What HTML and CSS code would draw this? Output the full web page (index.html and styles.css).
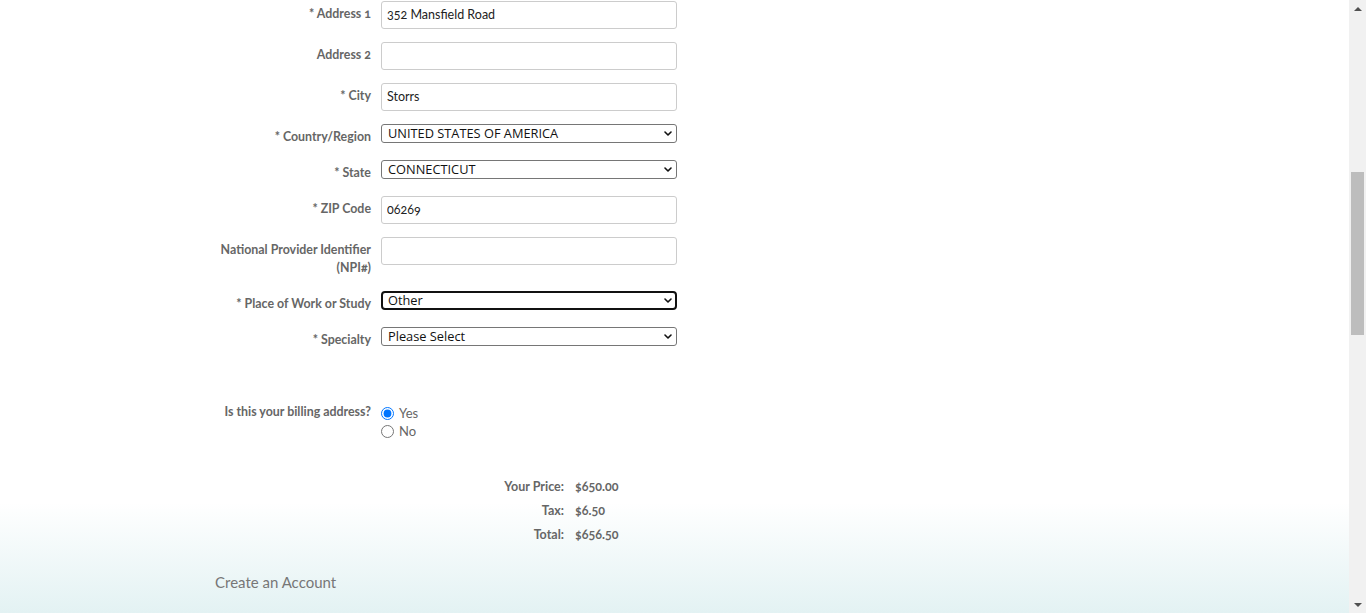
FILE: index.html
```html
<!DOCTYPE html>
<html lang="en">
<head>
<meta charset="utf-8">
<title>Checkout – Address</title>
<link rel="stylesheet" href="styles.css">
</head>
<body>
<div class="viewport">
  <main class="page">
    <form class="form">
      <div class="row">
        <label class="label" for="a1">* Address 1</label>
        <input class="text" id="a1" type="text" value="352 Mansfield Road">
      </div>
      <div class="row">
        <label class="label" for="a2">Address 2</label>
        <input class="text" id="a2" type="text" value="">
      </div>
      <div class="row">
        <label class="label" for="city">* City</label>
        <input class="text" id="city" type="text" value="Storrs">
      </div>
      <div class="row">
        <label class="label" for="country">* Country/Region</label>
        <div class="select-wrap">
          <select class="select" id="country"><option>UNITED STATES OF AMERICA</option></select>
          <svg class="chev" width="8" height="5" viewBox="0 0 8 5"><path d="M1 1 L4 4 L7 1" fill="none" stroke="#111" stroke-width="1.6" stroke-linecap="round" stroke-linejoin="round"/></svg>
        </div>
      </div>
      <div class="row">
        <label class="label" for="state">* State</label>
        <div class="select-wrap">
          <select class="select" id="state"><option>CONNECTICUT</option></select>
          <svg class="chev" width="8" height="5" viewBox="0 0 8 5"><path d="M1 1 L4 4 L7 1" fill="none" stroke="#111" stroke-width="1.6" stroke-linecap="round" stroke-linejoin="round"/></svg>
        </div>
      </div>
      <div class="row">
        <label class="label" for="zip">* ZIP Code</label>
        <input class="text" id="zip" type="text" value="06269">
      </div>
      <div class="row">
        <label class="label" for="npi">National Provider Identifier (NPI#)</label>
        <input class="text" id="npi" type="text" value="">
      </div>
      <div class="row">
        <label class="label" for="work">* Place of Work or Study</label>
        <div class="select-wrap">
          <select class="select select-focus" id="work"><option>Other</option></select>
          <svg class="chev" width="8" height="5" viewBox="0 0 8 5"><path d="M1 1 L4 4 L7 1" fill="none" stroke="#111" stroke-width="1.6" stroke-linecap="round" stroke-linejoin="round"/></svg>
        </div>
      </div>
      <div class="row">
        <label class="label" for="spec">* Specialty</label>
        <div class="select-wrap">
          <select class="select" id="spec"><option>Please Select</option></select>
          <svg class="chev" width="8" height="5" viewBox="0 0 8 5"><path d="M1 1 L4 4 L7 1" fill="none" stroke="#111" stroke-width="1.6" stroke-linecap="round" stroke-linejoin="round"/></svg>
        </div>
      </div>

      <div class="row row-billing">
        <span class="label label-billing">Is this your billing address?</span>
        <div class="radios">
          <label class="radio"><input type="radio" name="billing" checked> Yes</label>
          <label class="radio"><input type="radio" name="billing"> No</label>
        </div>
      </div>
    </form>

    <section class="bottom">
      <dl class="summary">
        <dt>Your Price:</dt><dd>$650.00</dd>
        <dt>Tax:</dt><dd>$6.50</dd>
        <dt>Total:</dt><dd>$656.50</dd>
      </dl>
      <h2 class="account">Create an Account</h2>
    </section>
  </main>

  <aside class="scrollbar" aria-hidden="true">
    <div class="sb-arrow sb-up"></div>
    <div class="sb-track"><div class="sb-thumb"></div></div>
    <div class="sb-arrow sb-down"></div>
  </aside>
</div>
</body>
</html>
```

FILE: styles.css
```css
* { box-sizing: border-box; }

html, body {
  margin: 0;
  padding: 0;
  height: 100%;
  overflow: hidden;
  background: #fff;
}

body {
  font-family: Lato, "Open Sans", sans-serif;
  color: #666;
}

.viewport {
  display: flex;
  height: 613px;
}

.page {
  flex: 1;
  display: flex;
  flex-direction: column;
  padding-top: 1px;
}

.form {
  padding-left: 215px;
}

.row {
  display: grid;
  grid-template-columns: 156px 296px;
  column-gap: 10px;
  align-items: start;
  margin-bottom: 13px;
}

.label {
  text-align: right;
  font-weight: 700;
  font-size: 12.4px;
  line-height: 18px;
  padding: 4px 0 1px;
  color: #666;
  font-variant-numeric: oldstyle-nums;
}

.text {
  height: 28px;
  width: 296px;
  border: 1px solid #ccc;
  border-radius: 3px;
  padding: 0 5px 2px;
  font-family: Lato, "Open Sans", sans-serif;
  font-size: 12.5px;
  color: #222;
  background: #fff;
  font-variant-numeric: oldstyle-nums;
  outline: none;
}

.select-wrap {
  position: relative;
  width: 296px;
  height: 19px;
}

.select {
  -webkit-appearance: none;
  appearance: none;
  display: block;
  height: 19px;
  width: 296px;
  margin: 0;
  border: 1px solid #767676;
  border-radius: 3px;
  padding: 0 20px 0 6px;
  font-family: "Open Sans", sans-serif;
  font-size: 12.8px;
  line-height: 15px;
  color: #111;
  background-color: #fff;
  outline: none;
}

.select-focus {
  border: 2px solid #111;
  border-radius: 4px;
  padding: 0 19px 0 5px;
  line-height: 13px;
}

.chev {
  position: absolute;
  right: 5px;
  top: 7px;
  pointer-events: none;
}

.row-billing {
  margin-top: 49px;
  margin-bottom: 0;
}

.label-billing {
  font-family: Lato, sans-serif;
}

.radios {
  display: flex;
  flex-direction: column;
  padding-top: 5px;
}

.radio {
  display: flex;
  align-items: center;
  height: 18px;
  font-family: Lato, sans-serif;
  font-size: 13px;
  color: #666;
  gap: 5px;
}

.radio input {
  margin: 0;
  width: 13px;
  height: 13px;
}

.bottom {
  flex: 1;
  margin-top: 35px;
  background: linear-gradient(to bottom, #ffffff 0%, #ffffff 20%, #e3f2f3 100%);
}

.summary {
  display: grid;
  grid-template-columns: 349px auto;
  column-gap: 11px;
  margin: 0;
  padding-left: 215px;
  font-size: 12.5px;
  line-height: 24px;
  font-weight: 700;
  font-variant-numeric: oldstyle-nums;
}

.summary dt {
  text-align: right;
  color: #666;
}

.summary dd {
  margin: 0;
  color: #666;
}

.account {
  margin: 25px 0 0 215px;
  font-size: 15px;
  line-height: 20px;
  font-weight: 400;
  color: #777;
}

.scrollbar {
  width: 17px;
  flex: none;
  background: #f1f1f1;
  display: flex;
  flex-direction: column;
}

.sb-arrow {
  height: 17px;
  display: flex;
  align-items: center;
  justify-content: center;
}

.sb-up::before {
  content: "";
  border-left: 4px solid transparent;
  border-right: 4px solid transparent;
  border-bottom: 4px solid #505050;
}

.sb-down::before {
  content: "";
  border-left: 4px solid transparent;
  border-right: 4px solid transparent;
  border-top: 4px solid #505050;
}

.sb-track {
  flex: 1;
  padding: 155px 2px 0;
}

.sb-thumb {
  height: 163px;
  background: #bdbdbd;
}
```
